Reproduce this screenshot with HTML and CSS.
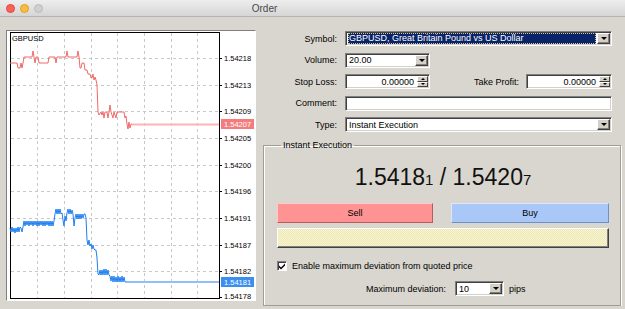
FILE: index.html
```html
<!DOCTYPE html>
<html lang="en">
<head>
  <meta charset="UTF-8" />
  <title>Order</title>
  <link rel="stylesheet" href="styles.css">
</head>
<body>
  <div class="titlebar">
    <span class="light red"></span>
    <span class="light yellow"></span>
    <span class="light off"></span>
    <div class="title">Order</div>
  </div>

  <div class="main">
    <div class="chart">
      <svg width="248" height="269" viewBox="7 31 248 269">
        <rect x="7" y="31" width="248" height="269" fill="#fff"/>
        <!-- grid -->
        <g stroke="#c8c8c8" stroke-dasharray="3 3" stroke-width="1">
          <path d="M37.5 33V298M64.5 33V298M91.5 33V298M117.5 33V298M144.5 33V298M171.5 33V298M197.5 33V298"/>
          <path d="M11 58.5H219M11 85.5H219M11 111.5H219M11 138.5H219M11 165.5H219M11 191.5H219M11 218.5H219M11 245.5H219M11 271.5H219"/>
        </g>
        <rect x="10.5" y="32.5" width="209" height="266" fill="none" stroke="#000"/>
        <text x="12" y="41" class="sym">GBPUSD</text>

        <!-- ask -->
        <polyline fill="none" stroke="#f26868" stroke-width="1"
          points="10,63 17,63 18,68 20,68 21,63 22,68 23,63 24,57 32,57 33,51 34,57 35,63 36,57 38,57 39,63 48,63 49,57 55,57 56,63 57,57 66,57 67,51 68,57 77,57 78,51 79,57 80,68 81,68 82,63 84,63 85,70 87,70 88,74 90,74 91,78 92,78 93,74 94,80 95,77 96,80 97,85 98,112 99,115 101,112 102,115 103,112 104,118 105,112 107,112 108,118 109,112 110,105 111,112 113,118 114,112 116,118 117,112 124,112 125,118 126,116 127,124 128,129 129,122 130,128 131,124 132,124"/>
        <path d="M132 124.5H219" stroke="#ffb3b3" stroke-width="2"/>

        <!-- bid -->
        <polyline fill="none" stroke="#1f7ff0" stroke-width="1"
          points="10,228 11,232 12,227 13,232 14,228 15,233 16,228 17,232 18,227 19,232 20,227 21,228 22,232 23,227 24,221 25,226 26,221 27,225 28,221 29,226 30,221 31,225 32,221 33,226 34,221 35,225 36,221 37,226 38,221 39,226 40,221 41,225 42,221 43,226 44,221 45,226 46,221 47,225 48,221 49,226 50,221 51,226 52,221 53,226 54,221 55,214 56,209 57,214 58,209 59,214 60,209 61,214 62,213 63,220 64,226 65,216 66,221 67,213 68,209 69,214 70,209 71,214 72,210 73,214 74,226 75,218 76,214 77,219 78,214 79,219 80,214 81,219 82,214 83,218 84,214 85,214 86,218 87,240 88,245 89,240 90,246 91,244 92,249 93,245 94,249 95,250 96,250 97,258 98,274 99,275 100,270 101,275 102,270 103,275 104,269 105,275 106,269 107,275 108,270 109,275 110,276 111,281 112,276 113,282 114,276 115,282 116,277 117,282 118,276 119,282 120,277 121,282 122,276 123,282 124,277 125,282 127,282"/>
        <path d="M127 282H219" stroke="#90c0f8" stroke-width="2"/>

        <!-- price scale -->
        <g stroke="#000">
          <path d="M219 58.5H222M219 85.5H222M219 111.5H222M219 138.5H222M219 165.5H222M219 191.5H222M219 218.5H222M219 245.5H222M219 271.5H222M219 297.5H222"/>
        </g>
        <g class="scale">
          <text x="224" y="61">1.54218</text>
          <text x="224" y="88">1.54213</text>
          <text x="224" y="114">1.54209</text>
          <text x="224" y="141">1.54205</text>
          <text x="224" y="168">1.54200</text>
          <text x="224" y="194">1.54196</text>
          <text x="224" y="221">1.54191</text>
          <text x="224" y="248">1.54187</text>
          <text x="224" y="274">1.54182</text>
          <text x="224" y="299">1.54178</text>
        </g>
        <rect x="221" y="119" width="33" height="10" fill="#f47c7c"/>
        <text x="224" y="127" class="scale hl">1.54207</text>
        <rect x="221" y="277" width="33" height="10" fill="#3a8ff0"/>
        <text x="224" y="285" class="scale hl">1.54181</text>
      </svg>
    </div>

    <div class="side">
      <div class="form">
        <div class="row">
          <span class="lbl">Symbol:</span>
          <div class="field grow">
            <span class="sel">GBPUSD, Great Britain Pound vs US Dollar</span>
            <span class="drop"></span>
          </div>
        </div>
        <div class="row">
          <span class="lbl">Volume:</span>
          <div class="field short">
            <span class="val">20.00</span>
            <span class="drop"></span>
          </div>
        </div>
        <div class="row">
          <span class="lbl">Stop Loss:</span>
          <div class="field short">
            <span class="val num">0.00000</span>
            <span class="spin"><i class="up"></i><i class="down"></i></span>
          </div>
          <span class="lbl2">Take Profit:</span>
          <div class="field tp">
            <span class="val num">0.00000</span>
            <span class="spin"><i class="up"></i><i class="down"></i></span>
          </div>
        </div>
        <div class="row">
          <span class="lbl">Comment:</span>
          <div class="field grow"></div>
        </div>
        <div class="row">
          <span class="lbl">Type:</span>
          <div class="field grow">
            <span class="val">Instant Execution</span>
            <span class="drop"></span>
          </div>
        </div>
      </div>

      <fieldset class="group">
        <legend>Instant Execution</legend>
        <div class="price">1.5418<span class="pip">1</span> / 1.5420<span class="pip">7</span></div>
        <div class="trade">
          <div class="btn sell">Sell</div>
          <div class="btn buy">Buy</div>
        </div>
        <div class="bar"></div>
        <div class="opt">
          <span class="check">
            <svg width="8" height="8" viewBox="0 0 8 8"><path d="M1 3.5L3 5.5L7 1.5V3.5L3 7.5L1 5.5Z" fill="#000"/></svg>
          </span>
          <span>Enable maximum deviation from quoted price</span>
        </div>
        <div class="dev">
          <span>Maximum deviation:</span>
          <div class="field devbox">
            <span class="val">10</span>
            <span class="drop"></span>
          </div>
          <span>pips</span>
        </div>
      </fieldset>
    </div>
  </div>
</body>
</html>
```

FILE: styles.css
```css
body {
  margin: 0;
  font-family: "Liberation Sans", Arial, sans-serif;
  font-size: 9px;
  color: #000;
  background: #d9d6cf;
  overflow: hidden;
}
.titlebar {
  height: 17px;
  box-sizing: border-box;
  display: flex;
  align-items: center;
  gap: 5px;
  padding-left: 6px;
  background: linear-gradient(#ededed, #d5d5d5);
  border-bottom: 1px solid #b3b3b3;
}
.light {
  width: 9px;
  height: 9px;
  box-sizing: border-box;
  border-radius: 50%;
  border: 1px solid;
}
.light.red { background: #fc5f57; border-color: #df4942; }
.light.yellow { background: #fdbb3e; border-color: #dc9e32; }
.light.off { background: #d0d0d0; border-color: #b9b9b9; }
.title {
  flex: 1;
  text-align: center;
  padding-right: 144px;
  font-size: 10px;
  color: #4a4a4a;
}
.main {
  display: flex;
  gap: 7px;
  padding: 13px 0 0 6px;
}
.chart {
  width: 250px;
  height: 271px;
  box-sizing: border-box;
  border: 1px solid;
  border-color: #808080 #fff #fff #808080;
}
.chart svg { display: block; }
.sym { font-size: 7.5px; fill: #000; }
.scale { font-size: 7.5px; fill: #000; }
.scale.hl { fill: #fff; }

.side {
  width: 356px;
  padding-top: 1px;
}
.form {
  display: flex;
  flex-direction: column;
  gap: 6.5px;
  padding-right: 7px;
}
.row {
  display: flex;
  align-items: center;
  height: 15px;
}
.lbl {
  width: 74px;
  margin-right: 8px;
  text-align: right;
}
.lbl2 {
  flex: 1;
  text-align: right;
  margin-right: 7px;
}
.field {
  height: 15px;
  box-sizing: border-box;
  display: flex;
  align-items: center;
  background: #fff;
  border: 1px solid;
  border-color: #808080 #fff #fff #808080;
  box-shadow: inset 1px 1px 0 #404040, inset -1px -1px 0 #d4d0c8;
  padding: 1px 1px 1px 2px;
}
.field.grow { flex: 1; }
.field.short { width: 85px; }
.field.tp { width: 86px; }
.val {
  flex: 1;
  white-space: nowrap;
  padding-left: 1px;
}
.val.num { text-align: right; padding-right: 3px; }
.sel {
  flex: 1;
  height: 11px;
  line-height: 11px;
  background: #0a246a;
  color: #fff;
  padding-left: 1px;
  margin-right: 1px;
  outline: 1px dotted #d8c890;
  outline-offset: -1px;
  white-space: nowrap;
}
.drop {
  width: 13px;
  height: 11px;
  box-sizing: border-box;
  display: flex;
  align-items: center;
  justify-content: center;
  background: #d4d0c8;
  border: 1px solid;
  border-color: #fff #404040 #404040 #fff;
  box-shadow: inset -1px -1px 0 #808080;
}
.drop::after {
  content: "";
  border-left: 3px solid transparent;
  border-right: 3px solid transparent;
  border-top: 3px solid #000;
}
.spin {
  width: 11px;
  height: 11px;
  display: flex;
  flex-direction: column;
}
.spin i {
  flex: 1;
  box-sizing: border-box;
  display: flex;
  align-items: center;
  justify-content: center;
  background: #d4d0c8;
  border: 1px solid;
  border-color: #fff #404040 #404040 #fff;
}
.spin i.up::after {
  content: "";
  border-left: 2px solid transparent;
  border-right: 2px solid transparent;
  border-bottom: 2px solid #000;
}
.spin i.down::after {
  content: "";
  border-left: 2px solid transparent;
  border-right: 2px solid transparent;
  border-top: 2px solid #000;
}

.group {
  margin: 7.5px 0 0;
  padding: 0 11px 9px 13px;
  border: 1px solid #a09d96;
  box-shadow: inset 1px 1px 0 #fff, 1px 1px 0 #fff;
}
.group legend {
  padding: 0 2px;
  margin-left: 4px;
  line-height: 11px;
}
.price {
  margin-top: 13px;
  text-align: center;
  font-size: 23px;
  line-height: 27px;
  color: #111;
}
.pip { font-size: 15px; }
.trade {
  display: flex;
  gap: 18px;
  margin-top: 10.5px;
}
.btn {
  height: 20px;
  box-sizing: border-box;
  display: flex;
  align-items: center;
  justify-content: center;
  border: 1px solid;
}
.sell {
  width: 156px;
  background: #ff9393;
  border-color: #ffc9c9 #b85a5a #b85a5a #ffc9c9;
}
.buy {
  width: 158px;
  background: #a9c8f8;
  border-color: #dae7fc #6f90c6 #6f90c6 #dae7fc;
}
.bar {
  margin-top: 5px;
  height: 20px;
  box-sizing: border-box;
  background: repeating-conic-gradient(#ede7b2 0 25%, #f8f5d6 0 50%) 0 0 / 2px 2px;
  border: 1px solid;
  border-color: #fff #404040 #404040 #fff;
  box-shadow: inset -1px -1px 0 #808080;
}
.opt {
  display: flex;
  align-items: center;
  gap: 5px;
  margin-top: 12px;
  height: 12px;
}
.check {
  width: 10px;
  height: 10px;
  box-sizing: border-box;
  display: flex;
  align-items: center;
  justify-content: center;
  background: #fff;
  border: 1px solid;
  border-color: #808080 #fff #fff #808080;
  box-shadow: inset 1px 1px 0 #404040;
}
.check svg { display: block; }
.dev {
  display: flex;
  align-items: center;
  height: 15px;
  margin-top: 9px;
  padding-left: 89px;
}
.devbox {
  width: 49px;
  margin: 0 5px 0 9px;
}
```
